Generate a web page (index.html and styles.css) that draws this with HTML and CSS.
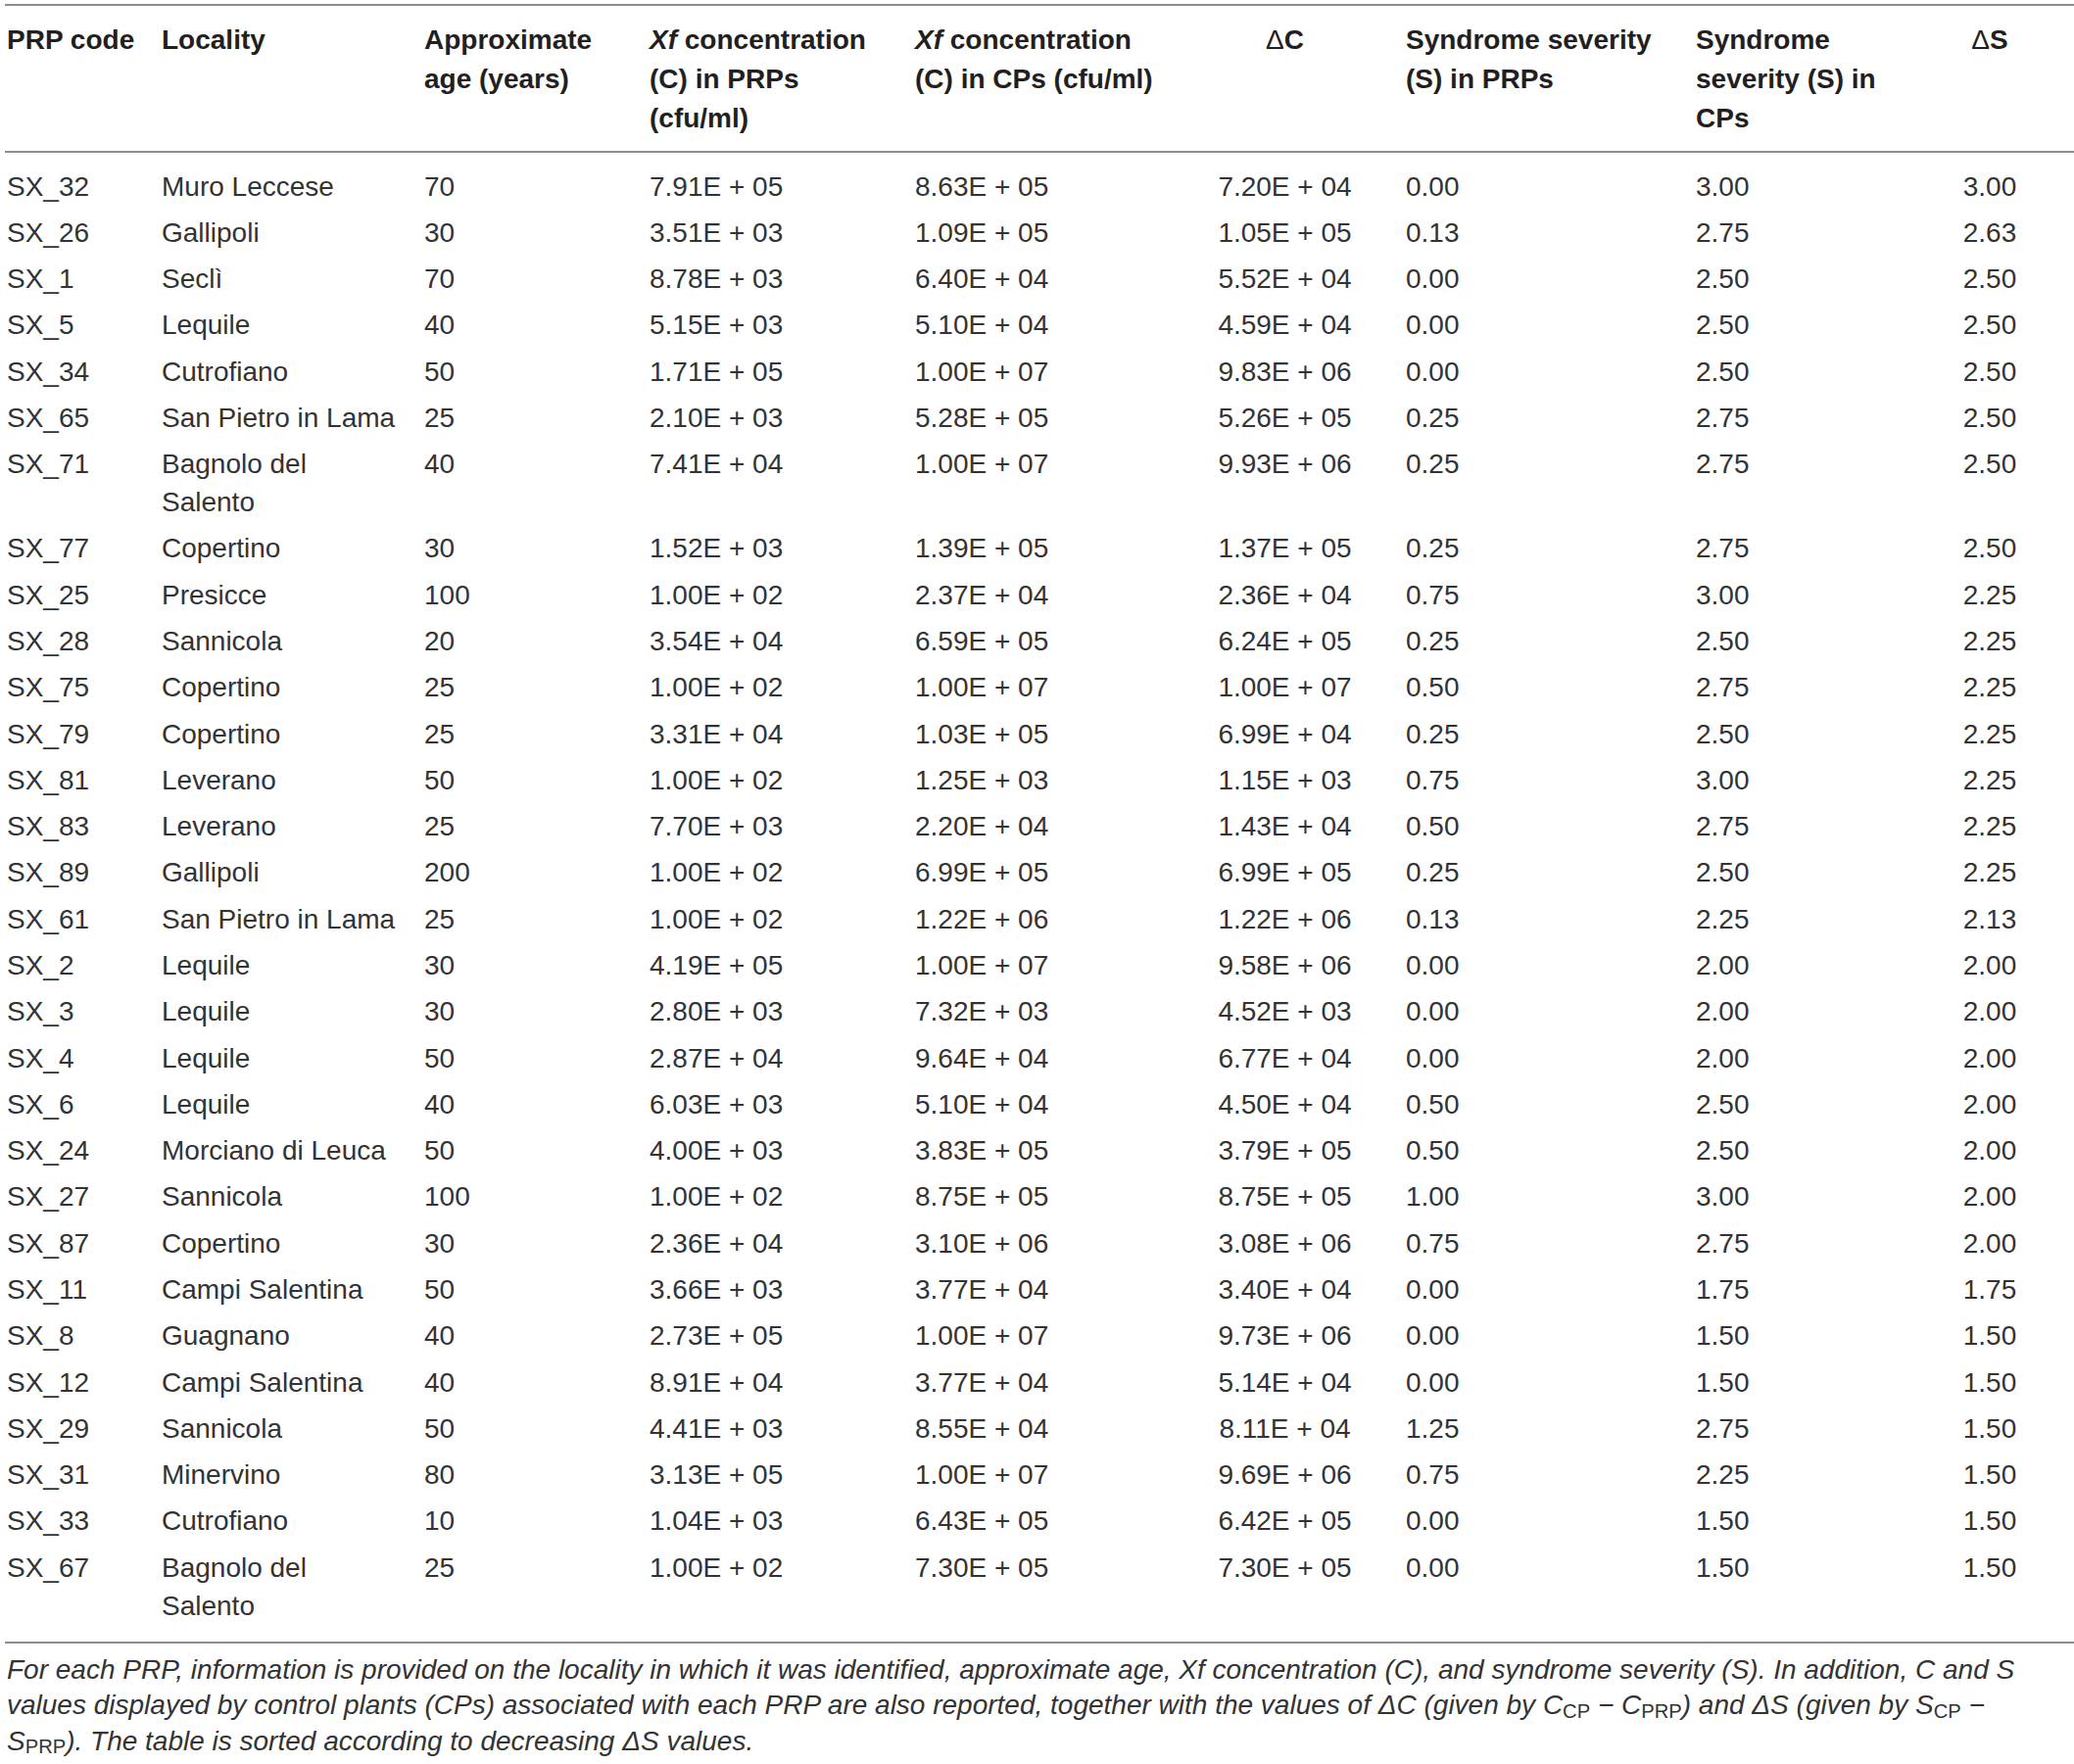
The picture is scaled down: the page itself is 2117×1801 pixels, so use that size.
FILE: index.html
```html
<!DOCTYPE html>
<html lang="en">
<head>
<meta charset="utf-8">
<title>PRP table</title>
<link rel="stylesheet" href="styles.css">
</head>
<body>
<div class="wrap">
<table class="data">
<colgroup>
<col class="c1"><col class="c2"><col class="c3"><col class="c4"><col class="c5"><col class="c6"><col class="c7"><col class="c8"><col class="c9">
</colgroup>
<thead>
<tr>
<th>PRP code</th>
<th>Locality</th>
<th>Approximate<br>age (years)</th>
<th><i>Xf</i> concentration<br>(C) in PRPs<br>(cfu/ml)</th>
<th><i>Xf</i> concentration<br>(C) in CPs (cfu/ml)</th>
<th class="ctr"><span class="delta">Δ</span>C</th>
<th>Syndrome severity<br>(S) in PRPs</th>
<th>Syndrome<br>severity (S) in<br>CPs</th>
<th class="ctr"><span class="delta">Δ</span>S</th>
</tr>
</thead>
<tbody>
<tr><td>SX_32</td><td>Muro Leccese</td><td>70</td><td>7.91E + 05</td><td>8.63E + 05</td><td class="ctr">7.20E + 04</td><td>0.00</td><td>3.00</td><td class="ctr">3.00</td></tr>
<tr><td>SX_26</td><td>Gallipoli</td><td>30</td><td>3.51E + 03</td><td>1.09E + 05</td><td class="ctr">1.05E + 05</td><td>0.13</td><td>2.75</td><td class="ctr">2.63</td></tr>
<tr><td>SX_1</td><td>Seclì</td><td>70</td><td>8.78E + 03</td><td>6.40E + 04</td><td class="ctr">5.52E + 04</td><td>0.00</td><td>2.50</td><td class="ctr">2.50</td></tr>
<tr><td>SX_5</td><td>Lequile</td><td>40</td><td>5.15E + 03</td><td>5.10E + 04</td><td class="ctr">4.59E + 04</td><td>0.00</td><td>2.50</td><td class="ctr">2.50</td></tr>
<tr><td>SX_34</td><td>Cutrofiano</td><td>50</td><td>1.71E + 05</td><td>1.00E + 07</td><td class="ctr">9.83E + 06</td><td>0.00</td><td>2.50</td><td class="ctr">2.50</td></tr>
<tr><td>SX_65</td><td>San Pietro in Lama</td><td>25</td><td>2.10E + 03</td><td>5.28E + 05</td><td class="ctr">5.26E + 05</td><td>0.25</td><td>2.75</td><td class="ctr">2.50</td></tr>
<tr><td>SX_71</td><td>Bagnolo del<br>Salento</td><td>40</td><td>7.41E + 04</td><td>1.00E + 07</td><td class="ctr">9.93E + 06</td><td>0.25</td><td>2.75</td><td class="ctr">2.50</td></tr>
<tr><td>SX_77</td><td>Copertino</td><td>30</td><td>1.52E + 03</td><td>1.39E + 05</td><td class="ctr">1.37E + 05</td><td>0.25</td><td>2.75</td><td class="ctr">2.50</td></tr>
<tr><td>SX_25</td><td>Presicce</td><td>100</td><td>1.00E + 02</td><td>2.37E + 04</td><td class="ctr">2.36E + 04</td><td>0.75</td><td>3.00</td><td class="ctr">2.25</td></tr>
<tr><td>SX_28</td><td>Sannicola</td><td>20</td><td>3.54E + 04</td><td>6.59E + 05</td><td class="ctr">6.24E + 05</td><td>0.25</td><td>2.50</td><td class="ctr">2.25</td></tr>
<tr><td>SX_75</td><td>Copertino</td><td>25</td><td>1.00E + 02</td><td>1.00E + 07</td><td class="ctr">1.00E + 07</td><td>0.50</td><td>2.75</td><td class="ctr">2.25</td></tr>
<tr><td>SX_79</td><td>Copertino</td><td>25</td><td>3.31E + 04</td><td>1.03E + 05</td><td class="ctr">6.99E + 04</td><td>0.25</td><td>2.50</td><td class="ctr">2.25</td></tr>
<tr><td>SX_81</td><td>Leverano</td><td>50</td><td>1.00E + 02</td><td>1.25E + 03</td><td class="ctr">1.15E + 03</td><td>0.75</td><td>3.00</td><td class="ctr">2.25</td></tr>
<tr><td>SX_83</td><td>Leverano</td><td>25</td><td>7.70E + 03</td><td>2.20E + 04</td><td class="ctr">1.43E + 04</td><td>0.50</td><td>2.75</td><td class="ctr">2.25</td></tr>
<tr><td>SX_89</td><td>Gallipoli</td><td>200</td><td>1.00E + 02</td><td>6.99E + 05</td><td class="ctr">6.99E + 05</td><td>0.25</td><td>2.50</td><td class="ctr">2.25</td></tr>
<tr><td>SX_61</td><td>San Pietro in Lama</td><td>25</td><td>1.00E + 02</td><td>1.22E + 06</td><td class="ctr">1.22E + 06</td><td>0.13</td><td>2.25</td><td class="ctr">2.13</td></tr>
<tr><td>SX_2</td><td>Lequile</td><td>30</td><td>4.19E + 05</td><td>1.00E + 07</td><td class="ctr">9.58E + 06</td><td>0.00</td><td>2.00</td><td class="ctr">2.00</td></tr>
<tr><td>SX_3</td><td>Lequile</td><td>30</td><td>2.80E + 03</td><td>7.32E + 03</td><td class="ctr">4.52E + 03</td><td>0.00</td><td>2.00</td><td class="ctr">2.00</td></tr>
<tr><td>SX_4</td><td>Lequile</td><td>50</td><td>2.87E + 04</td><td>9.64E + 04</td><td class="ctr">6.77E + 04</td><td>0.00</td><td>2.00</td><td class="ctr">2.00</td></tr>
<tr><td>SX_6</td><td>Lequile</td><td>40</td><td>6.03E + 03</td><td>5.10E + 04</td><td class="ctr">4.50E + 04</td><td>0.50</td><td>2.50</td><td class="ctr">2.00</td></tr>
<tr><td>SX_24</td><td>Morciano di Leuca</td><td>50</td><td>4.00E + 03</td><td>3.83E + 05</td><td class="ctr">3.79E + 05</td><td>0.50</td><td>2.50</td><td class="ctr">2.00</td></tr>
<tr><td>SX_27</td><td>Sannicola</td><td>100</td><td>1.00E + 02</td><td>8.75E + 05</td><td class="ctr">8.75E + 05</td><td>1.00</td><td>3.00</td><td class="ctr">2.00</td></tr>
<tr><td>SX_87</td><td>Copertino</td><td>30</td><td>2.36E + 04</td><td>3.10E + 06</td><td class="ctr">3.08E + 06</td><td>0.75</td><td>2.75</td><td class="ctr">2.00</td></tr>
<tr><td>SX_11</td><td>Campi Salentina</td><td>50</td><td>3.66E + 03</td><td>3.77E + 04</td><td class="ctr">3.40E + 04</td><td>0.00</td><td>1.75</td><td class="ctr">1.75</td></tr>
<tr><td>SX_8</td><td>Guagnano</td><td>40</td><td>2.73E + 05</td><td>1.00E + 07</td><td class="ctr">9.73E + 06</td><td>0.00</td><td>1.50</td><td class="ctr">1.50</td></tr>
<tr><td>SX_12</td><td>Campi Salentina</td><td>40</td><td>8.91E + 04</td><td>3.77E + 04</td><td class="ctr">5.14E + 04</td><td>0.00</td><td>1.50</td><td class="ctr">1.50</td></tr>
<tr><td>SX_29</td><td>Sannicola</td><td>50</td><td>4.41E + 03</td><td>8.55E + 04</td><td class="ctr">8.11E + 04</td><td>1.25</td><td>2.75</td><td class="ctr">1.50</td></tr>
<tr><td>SX_31</td><td>Minervino</td><td>80</td><td>3.13E + 05</td><td>1.00E + 07</td><td class="ctr">9.69E + 06</td><td>0.75</td><td>2.25</td><td class="ctr">1.50</td></tr>
<tr><td>SX_33</td><td>Cutrofiano</td><td>10</td><td>1.04E + 03</td><td>6.43E + 05</td><td class="ctr">6.42E + 05</td><td>0.00</td><td>1.50</td><td class="ctr">1.50</td></tr>
<tr><td>SX_67</td><td>Bagnolo del<br>Salento</td><td>25</td><td>1.00E + 02</td><td>7.30E + 05</td><td class="ctr">7.30E + 05</td><td>0.00</td><td>1.50</td><td class="ctr">1.50</td></tr>
</tbody>
</table>
<p class="caption">For each PRP, information is provided on the locality in which it was identified, approximate age, Xf concentration (C), and syndrome severity (S). In addition, C and S values displayed by control plants (CPs) associated with each PRP are also reported, together with the values of ΔC (given by C<sub>CP</sub> − C<sub>PRP</sub>) and ΔS (given by S<sub>CP</sub> −<br>S<sub>PRP</sub>). The table is sorted according to decreasing ΔS values.</p>
</div>
</body>
</html>
```
FILE: styles.css
```css
html, body {
  margin: 0;
  padding: 0;
  background: #ffffff;
}

.wrap {
  padding: 4px 0 0 5px;
  width: 2112px;
  font-family: "Liberation Sans", Arial, sans-serif;
  color: #231f20;
}

.data {
  width: 2112px;
  table-layout: fixed;
  border-collapse: collapse;
  border-top: 2px solid #8c8c8c;
  border-bottom: 2px solid #8c8c8c;
  font-size: 28px;
}

.c1 { width: 158px; }
.c2 { width: 268px; }
.c3 { width: 230px; }
.c4 { width: 271px; }
.c5 { width: 258px; }
.c6 { width: 243px; }
.c7 { width: 296px; }
.c8 { width: 216px; }
.c9 { width: 172px; }

.data th {
  font-weight: bold;
  text-align: left;
  vertical-align: top;
  line-height: 40px;
  padding: 15px 0 13px 2px;
  white-space: nowrap;
  border-bottom: 2px solid #8c8c8c;
  color: #231f20;
}

.data th i {
  font-style: italic;
}

.delta {
  font-weight: normal;
}

.data td {
  text-align: left;
  vertical-align: top;
  line-height: 39px;
  padding: 4.15px 0 4.15px 2px;
  white-space: nowrap;
  color: #333333;
}

.data tbody tr:first-child td {
  padding-top: 14.5px;
}

.data tbody tr:last-child td {
  padding-bottom: 17px;
}

.data .ctr {
  text-align: center;
  padding-left: 0;
}

.caption {
  margin: 9px 0 0 2px;
  width: 2108px;
  font-style: italic;
  font-size: 28px;
  line-height: 36.5px;
  color: #333333;
}

.caption sub {
  font-style: normal;
  font-size: 0.72em;
  line-height: 1;
  vertical-align: baseline;
  position: relative;
  top: 0.18em;
}
```
